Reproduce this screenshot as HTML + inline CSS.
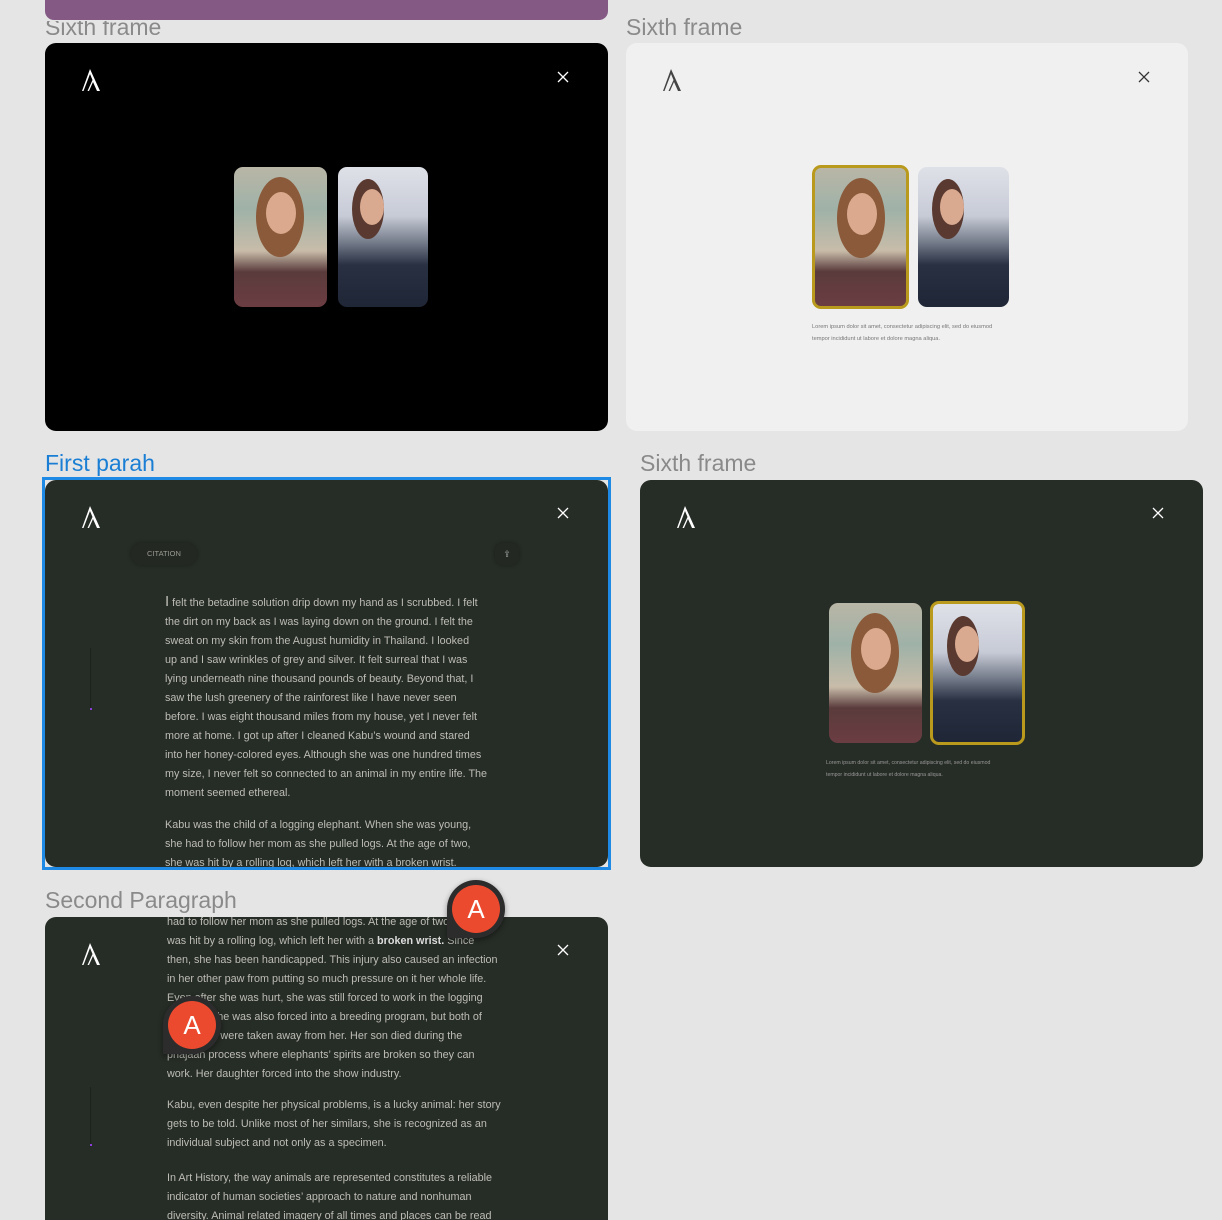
<!DOCTYPE html>
<html><head><meta charset="utf-8"><style>
*{margin:0;padding:0;box-sizing:border-box}
html,body{width:1222px;height:1220px;overflow:hidden}
body{background:#e5e5e5;position:relative;font-family:"Liberation Sans",sans-serif}
.abs{position:absolute}
.lbl{position:absolute;font-size:23px;color:#8a8a8a;line-height:1}
.fr{position:absolute;border-radius:11px;overflow:hidden}
.dark{background:#262c26}
.logo{position:absolute;width:20px;height:22px}
.x{position:absolute;width:12px;height:12px}
.p1,.p2{position:absolute;border-radius:9px;overflow:hidden}
.p1{background:linear-gradient(180deg,#b9b6a6 0%,#9fb2a8 30%,#c8bca9 60%,#5a3b3c 75%,#6b3d42 100%)}
.p2{background:linear-gradient(180deg,#dfe1e8 0%,#c7cbd6 35%,#6f7685 55%,#283042 70%,#1f2636 100%)}
.face{position:absolute;border-radius:50%}
.txt{position:absolute;font-size:10.8px;line-height:19px;color:#bdbdb5;white-space:nowrap}
.small{position:absolute;font-size:5.7px;line-height:12px;color:#777;white-space:nowrap}
.pin{position:absolute;width:58px;height:58px;border-radius:50% 50% 50% 0;background:#2c2c2c;box-shadow:0 2px 6px rgba(0,0,0,.4)}
.pin div{position:absolute;left:5px;top:5px;width:48px;height:48px;border-radius:50%;background:#ec4a2f;color:#fff;font-size:26px;text-align:center;line-height:48px}
</style></head><body>

<div class="abs" style="left:45px;top:-10px;width:563px;height:30px;background:#845a85;border-radius:9px"></div>
<div class="lbl" style="left:45px;top:16px;clip-path:inset(5px 0 0 0)">Sixth frame</div>
<div class="lbl" style="left:626px;top:16px">Sixth frame</div>

<!-- frame 1 -->
<div class="fr" style="left:45px;top:43px;width:563px;height:388px;background:#000">
 <svg class="logo" style="left:36px;top:26px" viewBox="0 0 20 22"><path d="M9 0L1 22h1.5L9 5l2.5 6-5 11h1.5L12 13l4 9h3z" fill="#fff"/></svg>
 <svg class="x" style="left:512px;top:28px" viewBox="0 0 12 12"><path d="M1 1L11 11M11 1L1 11" stroke="#fff" stroke-width="1.3"/></svg>
 <div class="p1" style="left:189px;top:124px;width:93px;height:140px"><div class="face" style="left:22px;top:10px;width:48px;height:80px;background:#8a5a3a"></div><div class="face" style="left:32px;top:25px;width:30px;height:42px;background:#dba98e"></div></div>
 <div class="p2" style="left:293px;top:124px;width:90px;height:140px"><div class="face" style="left:14px;top:12px;width:32px;height:60px;background:#5a3a30"></div><div class="face" style="left:22px;top:22px;width:24px;height:36px;background:#d9a990"></div></div>
</div>

<!-- frame 2 -->
<div class="fr" style="left:626px;top:43px;width:562px;height:388px;background:#f0f0f0">
 <svg class="logo" style="left:36px;top:26px" viewBox="0 0 20 22"><path d="M9 0L1 22h1.5L9 5l2.5 6-5 11h1.5L12 13l4 9h3z" fill="#444"/></svg>
 <svg class="x" style="left:512px;top:28px" viewBox="0 0 12 12"><path d="M1 1L11 11M11 1L1 11" stroke="#333" stroke-width="1.3"/></svg>
 <div class="p1" style="left:186px;top:122px;width:97px;height:144px;border:3px solid #b99a1d"><div class="face" style="left:22px;top:10px;width:48px;height:80px;background:#8a5a3a"></div><div class="face" style="left:32px;top:25px;width:30px;height:42px;background:#dba98e"></div></div>
 <div class="p2" style="left:292px;top:124px;width:91px;height:140px"><div class="face" style="left:14px;top:12px;width:32px;height:60px;background:#5a3a30"></div><div class="face" style="left:22px;top:22px;width:24px;height:36px;background:#d9a990"></div></div>
 <div class="small" style="left:186px;top:278px">Lorem ipsum dolor sit amet, consectetur adipiscing elit, sed do eiusmod<br>tempor incididunt ut labore et dolore magna aliqua.</div>
</div>

<div class="lbl" style="left:45px;top:452px;color:#1a7fd4">First parah</div>
<div class="lbl" style="left:640px;top:452px">Sixth frame</div>

<!-- frame 3 -->
<div class="abs" style="left:42px;top:477px;width:569px;height:393px;border:3px solid #1e8ae6"></div>
<div class="fr dark" style="left:45px;top:480px;width:563px;height:387px">
 <svg class="logo" style="left:36px;top:26px" viewBox="0 0 20 22"><path d="M9 0L1 22h1.5L9 5l2.5 6-5 11h1.5L12 13l4 9h3z" fill="#fff"/></svg>
 <svg class="x" style="left:512px;top:27px" viewBox="0 0 12 12"><path d="M1 1L11 11M11 1L1 11" stroke="#fff" stroke-width="1.3"/></svg>
 <div class="abs" style="left:86px;top:63px;width:66px;height:22px;border-radius:11px;background:#232922;box-shadow:0 0 4px rgba(0,0,0,.3);font-size:7.5px;color:#9a9a92;text-align:center;line-height:22px">CITATION</div>
 <div class="abs" style="left:450px;top:63px;width:24px;height:22px;border-radius:8px;background:#232922;box-shadow:0 0 4px rgba(0,0,0,.3);color:#aaa;font-size:9px;text-align:center;line-height:22px">⇪</div>
 <div class="abs" style="left:45px;top:168px;width:1px;height:62px;background:#1d221d"></div>
 <div class="abs" style="left:45px;top:228px;width:2px;height:2px;background:#8a3fd6"></div>
 <div class="txt" style="left:120px;top:112px"><span style="font-size:15px">I</span> felt the betadine solution drip down my hand as I scrubbed. I felt<br>the dirt on my back as I was laying down on the ground. I felt the<br>sweat on my skin from the August humidity in Thailand. I looked<br>up and I saw wrinkles of grey and silver. It felt surreal that I was<br>lying underneath nine thousand pounds of beauty. Beyond that, I<br>saw the lush greenery of the rainforest like I have never seen<br>before. I was eight thousand miles from my house, yet I never felt<br>more at home. I got up after I cleaned Kabu’s wound and stared<br>into her honey-colored eyes. Although she was one hundred times<br>my size, I never felt so connected to an animal in my entire life. The<br>moment seemed ethereal.</div>
 <div class="txt" style="left:120px;top:336px">Kabu was the child of a logging elephant. When she was young,<br>she had to follow her mom as she pulled logs. At the age of two,<br>she was hit by a rolling log, which left her with a broken wrist.</div>
</div>

<!-- frame 4 -->
<div class="fr dark" style="left:640px;top:480px;width:563px;height:387px">
 <svg class="logo" style="left:36px;top:26px" viewBox="0 0 20 22"><path d="M9 0L1 22h1.5L9 5l2.5 6-5 11h1.5L12 13l4 9h3z" fill="#fff"/></svg>
 <svg class="x" style="left:512px;top:27px" viewBox="0 0 12 12"><path d="M1 1L11 11M11 1L1 11" stroke="#fff" stroke-width="1.3"/></svg>
 <div class="p1" style="left:189px;top:123px;width:93px;height:140px"><div class="face" style="left:22px;top:10px;width:48px;height:80px;background:#8a5a3a"></div><div class="face" style="left:32px;top:25px;width:30px;height:42px;background:#dba98e"></div></div>
 <div class="p2" style="left:290px;top:121px;width:95px;height:144px;border:3px solid #b99a1d"><div class="face" style="left:14px;top:12px;width:32px;height:60px;background:#5a3a30"></div><div class="face" style="left:22px;top:22px;width:24px;height:36px;background:#d9a990"></div></div>
 <div class="small" style="left:186px;top:277px;color:#999;font-size:5.2px">Lorem ipsum dolor sit amet, consectetur adipiscing elit, sed do eiusmod<br>tempor incididunt ut labore et dolore magna aliqua.</div>
</div>

<div class="lbl" style="left:45px;top:889px">Second Paragraph</div>

<!-- frame 5 -->
<div class="fr dark" style="left:45px;top:917px;width:563px;height:320px">
 <svg class="logo" style="left:36px;top:26px" viewBox="0 0 20 22"><path d="M9 0L1 22h1.5L9 5l2.5 6-5 11h1.5L12 13l4 9h3z" fill="#fff"/></svg>
 <svg class="x" style="left:512px;top:27px" viewBox="0 0 12 12"><path d="M1 1L11 11M11 1L1 11" stroke="#fff" stroke-width="1.3"/></svg>
 <div class="abs" style="left:45px;top:170px;width:1px;height:60px;background:#1d221d"></div>
 <div class="abs" style="left:45px;top:227px;width:2px;height:2px;background:#8a3fd6"></div>
 <div class="txt" style="left:122px;top:-4px">had to follow her mom as she pulled logs. At the age of two, she<br>was hit by a rolling log, which left her with a <b style="color:#ddd">broken wrist.</b> Since<br>then, she has been handicapped. This injury also caused an infection<br>in her other paw from putting so much pressure on it her whole life.<br>Even after she was hurt, she was still forced to work in the logging<br>industry. She was also forced into a breeding program, but both of<br>her babies were taken away from her. Her son died during the<br>phajaan process where elephants’ spirits are broken so they can<br>work. Her daughter forced into the show industry.</div>
 <div class="txt" style="left:122px;top:179px">Kabu, even despite her physical problems, is a lucky animal: her story<br>gets to be told. Unlike most of her similars, she is recognized as an<br>individual subject and not only as a specimen.</div>
 <div class="txt" style="left:122px;top:252px">In Art History, the way animals are represented constitutes a reliable<br>indicator of human societies’ approach to nature and nonhuman<br>diversity. Animal related imagery of all times and places can be read</div>
</div>

<div class="pin" style="left:447px;top:880px"><div>A</div></div>
<div class="pin" style="left:163px;top:996px"><div>A</div></div>
</body></html>
